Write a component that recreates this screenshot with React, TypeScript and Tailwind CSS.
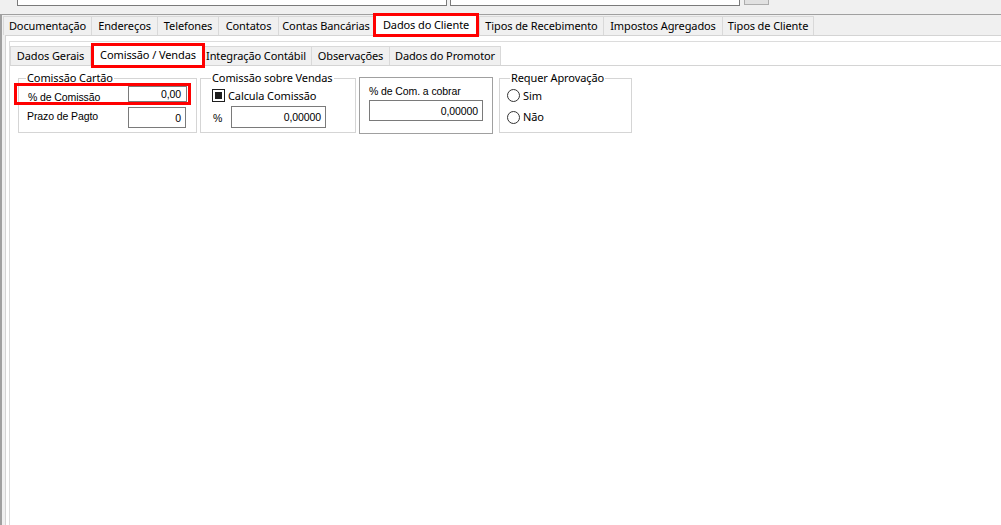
import React from "react";

const segoe = "font-['Noto_Sans',sans-serif] text-[11px] tracking-[-0.1px]";
const tahoma = "font-['Liberation_Sans',Arial,sans-serif] text-[10.5px]";

function OuterTab({ label, w, last }: { label: string; w: string; last?: boolean }) {
  return (
    <div
      className={`${w} h-[19px] shrink-0 flex items-center justify-center whitespace-nowrap bg-[#f0f0f0] border-t border-l border-[#d9d9d9] ${last ? "border-r" : ""}`}
    >
      {label}
    </div>
  );
}

function InnerTab({ label, w, left, start }: { label: string; w: string; left?: boolean; start?: boolean }) {
  return (
    <div
      className={`${w} h-[19px] shrink-0 flex items-center whitespace-nowrap bg-[#f0f0f0] border-t border-r border-[#d9d9d9] ${left ? "border-l" : ""} ${start ? "justify-start pl-[1px]" : "justify-center"}`}
    >
      {label}
    </div>
  );
}

function Radio() {
  return <div className="w-[13px] h-[13px] shrink-0 rounded-full border border-[#333333] bg-white" />;
}

export default function App() {
  return (
    <div className={`w-[1001px] h-[525px] overflow-hidden bg-[#f0f0f0] text-black ${segoe}`}>
      {/* top strip with cut-off inputs */}
      <div className="h-[14px] flex items-start">
        <div className="ml-[17px] w-[430px] h-[6px] bg-white border-x border-b border-[#7a7a7a]" />
        <div className="ml-[3px] w-[290px] h-[6px] bg-white border-x border-b border-[#7a7a7a]" />
        <div className="ml-[4px] w-[25px] h-[5px] bg-[#e1e1e1] border-x border-b border-[#adadad]" />
      </div>

      {/* main frame */}
      <div className="h-[511px] flex flex-col border-t border-l-2 border-[#a0a0a0]">
        {/* outer tabs */}
        <div className="h-[20px] shrink-0 flex items-end pl-[1px]">
          <OuterTab label="Documentação" w="w-[88px]" />
          <OuterTab label="Endereços" w="w-[66px]" />
          <OuterTab label="Telefones" w="w-[61px]" />
          <OuterTab label="Contatos" w="w-[60px]" />
          <OuterTab label="Contas Bancárias" w="w-[95px]" />
          <div className="relative z-10 w-[106px] h-[24px] -mb-[2px] shrink-0 flex items-center justify-center pt-[1px] whitespace-nowrap bg-white border-[3px] border-[#ff0000]">
            Dados do Cliente
          </div>
          <OuterTab label="Tipos de Recebimento" w="w-[124px]" />
          <OuterTab label="Impostos Agregados" w="w-[119px]" />
          <OuterTab label="Tipos de Cliente" w="w-[92px]" last />
        </div>

        {/* outer panel */}
        <div className="flex-1 ml-[3px] flex flex-col bg-white border-t border-l border-[#d4d4d4]">
          <div className="flex-1 mt-[5px] ml-[3px] flex flex-col border-t border-l border-[#dcdcdc]">
            {/* inner tabs */}
            <div className="h-[23px] shrink-0 flex items-end">
              <InnerTab label="Dados Gerais" w="w-[81px]" left />
              <div className="relative z-10 w-[114px] h-[25px] -mb-[3px] shrink-0 flex items-center justify-center whitespace-nowrap bg-white border-[3px] border-[#ff0000]">
                Comissão / Vendas
              </div>
              <InnerTab label="Integração Contábil" w="w-[107px]" start />
              <InnerTab label="Observações" w="w-[78px]" />
              <InnerTab label="Dados do Promotor" w="w-[111px]" />
            </div>

            {/* inner panel */}
            <div className="flex-1 border-t border-[#d4d4d4] flex items-start pt-[4px] pl-[8px]">
              {/* Comissão Cartão */}
              <fieldset className="w-[179px] h-[63px] shrink-0 border border-[#d5d5d5]">
                <legend className="ml-[7px] px-[1px] leading-[16px]">Comissão Cartão</legend>
                <div className="-mt-[3px] -ml-[5px] w-[177px] h-[22px] flex border-[3px] border-[#ff0000]">
                  <div className={`w-[111px] pl-[11px] pt-[4px] leading-[14px] ${tahoma}`}>% de Comissão</div>
                  <div className={`w-[59px] h-full flex items-center justify-end pr-[5px] leading-[14px] bg-white border border-[#7a7a7a] ${tahoma}`}>
                    0,00
                  </div>
                </div>
                <div className="mt-[2px] h-[21px] flex items-start">
                  <div className={`w-[109px] pl-[8px] pt-[2px] leading-[14px] ${tahoma}`}>Prazo de Pagto</div>
                  <div className={`w-[58px] h-full flex items-center justify-end pr-[4px] leading-[14px] bg-white border border-[#7a7a7a] ${tahoma}`}>
                    0
                  </div>
                </div>
              </fieldset>

              {/* Comissão sobre Vendas */}
              <fieldset className="ml-[3px] w-[156px] h-[63px] shrink-0 border border-[#d5d5d5]">
                <legend className="ml-[10px] px-[1px] leading-[16px]">Comissão sobre Vendas</legend>
                <div className="mt-[2px] h-[15px] flex items-center pl-[11px]">
                  <div className="w-[13px] h-[13px] shrink-0 flex items-center justify-center bg-white border border-[#1e1e1e]">
                    <div className="w-[7px] h-[7px] bg-[#1e1e1e]" />
                  </div>
                  <span className="ml-[3px] leading-[15px] whitespace-nowrap">Calcula Comissão</span>
                </div>
                <div className="mt-[3px] h-[22px] flex items-center">
                  <span className={`ml-[12px] w-[18px] pt-[3px] ${tahoma}`}>%</span>
                  <div className={`w-[95px] h-full flex items-center justify-end pr-[4px] leading-[14px] bg-white border border-[#7a7a7a] ${tahoma}`}>
                    0,00000
                  </div>
                </div>
              </fieldset>

              {/* % de Com. a cobrar */}
              <div className="ml-[3px] mt-[7px] w-[134px] h-[57px] shrink-0 border border-[#a0a0a0]">
                <div className={`mt-[6px] ml-[9px] leading-[14px] whitespace-nowrap ${tahoma}`}>% de Com. a cobrar</div>
                <div className={`mt-[2px] ml-[9px] w-[114px] h-[21px] flex items-center justify-end pr-[4px] leading-[14px] bg-white border border-[#7a7a7a] ${tahoma}`}>
                  0,00000
                </div>
              </div>

              {/* Requer Aprovação */}
              <fieldset className="ml-[6px] w-[133px] h-[63px] shrink-0 border border-[#d5d5d5]">
                <legend className="ml-[10px] px-[1px] leading-[16px]">Requer Aprovação</legend>
                <div className="mt-[2px] h-[15px] flex items-center pl-[7px]">
                  <Radio />
                  <span className="ml-[3px] leading-[15px]">Sim</span>
                </div>
                <div className="mt-[6px] h-[16px] flex items-center pl-[7px]">
                  <Radio />
                  <span className="ml-[3px] leading-[16px]">Não</span>
                </div>
              </fieldset>
            </div>
          </div>
        </div>
      </div>
    </div>
  );
}
